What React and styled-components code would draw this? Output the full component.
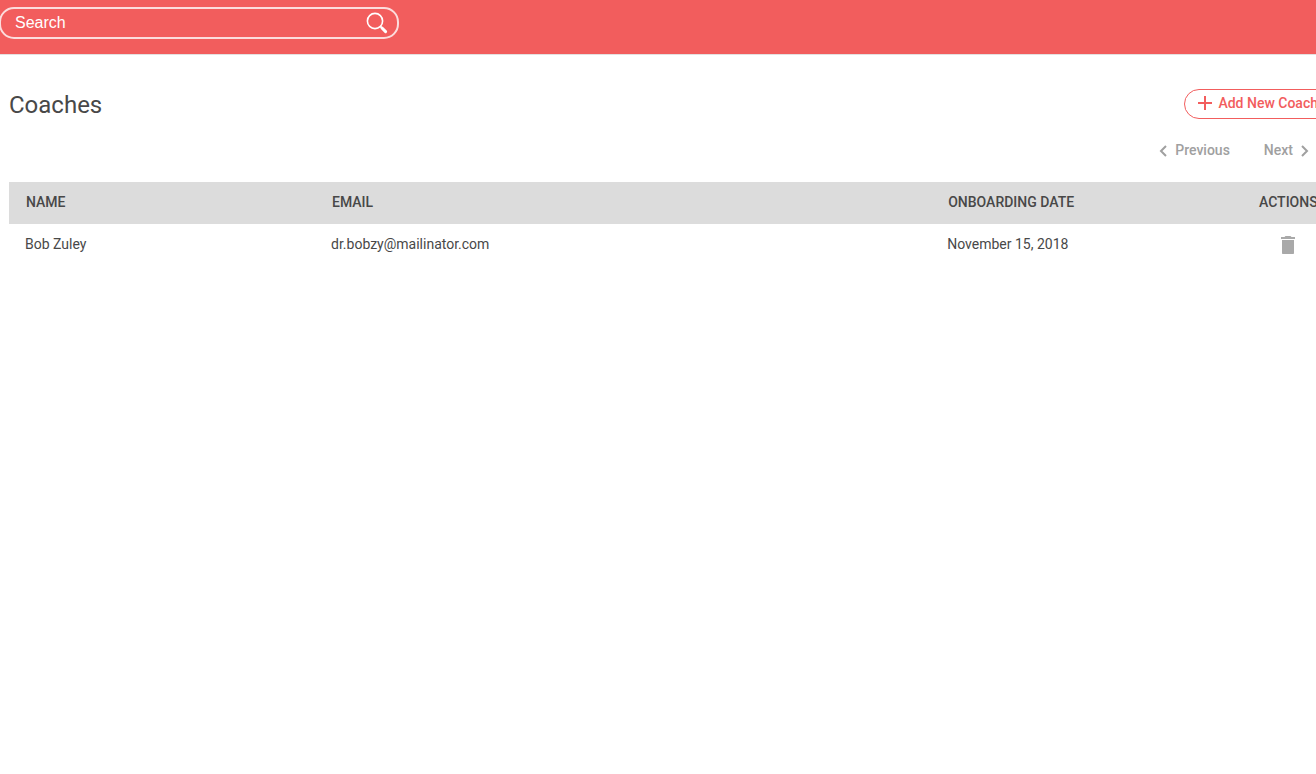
import styled, { createGlobalStyle } from 'styled-components';

const coaches = [
  { name: 'Bob Zuley', email: 'dr.bobzy@mailinator.com', date: 'November 15, 2018' },
];

const GlobalStyle = createGlobalStyle`
  * {
    box-sizing: border-box;
  }
  body {
    margin: 0;
    background: #fff;
    color: #484848;
    font-family: Roboto, sans-serif;
    font-size: 14px;
    line-height: 20px;
    overflow-x: hidden;
  }
  button {
    font: inherit;
    cursor: pointer;
  }
`;

const TopBar = styled.header`
  display: flex;
  height: 54px;
  padding-top: 7px;
  background: #f25d5d;
  box-shadow: 0 1px 0 #e4e0e0;
`;

const SearchBox = styled.form`
  display: flex;
  align-items: center;
  width: 400px;
  height: 32px;
  padding: 0 9px 0 14px;
  margin-left: -1px;
  border: 2px solid #fcdcdc;
  border-radius: 15px;
`;

const SearchInput = styled.input`
  flex: 1;
  min-width: 0;
  padding: 0;
  border: 0;
  outline: 0;
  background: transparent;
  color: #fff;
  font-family: 'Liberation Sans', Arial, sans-serif;
  font-size: 16px;
  &::placeholder {
    color: #fff;
    opacity: 1;
  }
`;

const IconButton = styled.button`
  display: inline-flex;
  padding: 0;
  border: 0;
  background: none;
  color: ${(props) => props.$color};
`;

/* the table runs a little past the right edge of the window */
const Content = styled.main`
  margin: 35px -18px 0 9px;
`;

const TitleRow = styled.div`
  display: flex;
  justify-content: space-between;
  align-items: flex-start;
  padding-right: 3px;
`;

const Title = styled.h1`
  margin: 0;
  font-size: 24px;
  font-weight: 400;
  line-height: 32px;
`;

const AddButton = styled.button`
  display: flex;
  align-items: center;
  gap: 5px;
  height: 30px;
  padding: 0 12px 2px;
  border: 1px solid #f25d5d;
  border-radius: 15px;
  background: #fff;
  color: #f25d5d;
  && {
    font-weight: 500;
  }
`;

const Pager = styled.nav`
  display: flex;
  justify-content: flex-end;
  gap: 34px;
  padding: 19px 25px 22px 0;
`;

const PageButton = styled.button`
  display: flex;
  align-items: center;
  gap: 8px;
  padding: 0;
  border: 0;
  background: none;
  color: #a0a0a0;
  && {
    font-weight: 500;
  }
  svg {
    margin-top: 2px;
  }
`;

const Table = styled.table`
  width: 100%;
  table-layout: fixed;
  border-collapse: collapse;
`;

const HeadCell = styled.th`
  width: ${(props) => props.$width};
  height: 42px;
  padding: 0 17px 2px;
  background: #dcdcdc;
  font-weight: 500;
  text-align: left;
  text-transform: uppercase;
`;

const Cell = styled.td`
  height: 42px;
  padding: 0 16px 2px;
  text-align: ${(props) => (props.$center ? 'center' : 'left')};
  ${IconButton} {
    vertical-align: middle;
  }
`;

const SearchIcon = () => (
  <svg width="22" height="22" viewBox="0 0 22 22" fill="none" stroke="currentColor">
    <circle cx="9" cy="9" r="7.600" strokeWidth="1.6" />
    <path d="M14.400 14.400l1.800 1.800" strokeWidth="1.8" />
    <path d="M16 16l3.600 3.600" strokeWidth="3" strokeLinecap="round" />
  </svg>
);

const PlusIcon = () => (
  <svg width="16" height="16" viewBox="0 0 16 16" fill="currentColor">
    <path d="M7 1h2v6h6v2H9v6H7V9H1V7h6z" />
  </svg>
);

const Chevron = ({ d }) => (
  <svg width="8" height="12" viewBox="0 0 8 12" fill="none" stroke="currentColor" strokeWidth="2">
    <path d={d} />
  </svg>
);

const TrashIcon = () => (
  <svg width="14" height="18" viewBox="0 0 14 18" fill="currentColor">
    <path d="M1 17c0 .6.4 1 1 1h10c.6 0 1-.4 1-1V4H1v13zM14 1h-3.500l-1-1h-5l-1 1H0v2h14V1z" />
  </svg>
);

const App = () => (
  <>
    <GlobalStyle />
    <TopBar>
      <SearchBox role="search" onSubmit={(e) => e.preventDefault()}>
        <SearchInput type="text" placeholder="Search" aria-label="Search" />
        <IconButton type="submit" aria-label="Search" $color="#fff">
          <SearchIcon />
        </IconButton>
      </SearchBox>
    </TopBar>
    <Content>
      <TitleRow>
        <Title>Coaches</Title>
        <AddButton type="button">
          <PlusIcon />
          Add New Coach
        </AddButton>
      </TitleRow>
      <Pager aria-label="Pagination">
        <PageButton type="button">
          <Chevron d="M7 1L2 6l5 5" />
          Previous
        </PageButton>
        <PageButton type="button">
          Next
          <Chevron d="M1 1l5 5-5 5" />
        </PageButton>
      </Pager>
      <Table>
        <thead>
          <tr>
            <HeadCell $width="23.1%">Name</HeadCell>
            <HeadCell $width="46.5%">Email</HeadCell>
            <HeadCell>Onboarding Date</HeadCell>
            <HeadCell $width="92px">Actions</HeadCell>
          </tr>
        </thead>
        <tbody>
          {coaches.map((coach) => (
            <tr key={coach.email}>
              <Cell>{coach.name}</Cell>
              <Cell>{coach.email}</Cell>
              <Cell>{coach.date}</Cell>
              <Cell $center>
                <IconButton type="button" aria-label={`Delete ${coach.name}`} $color="#a9a9a9">
                  <TrashIcon />
                </IconButton>
              </Cell>
            </tr>
          ))}
        </tbody>
      </Table>
    </Content>
  </>
);

export default App;
